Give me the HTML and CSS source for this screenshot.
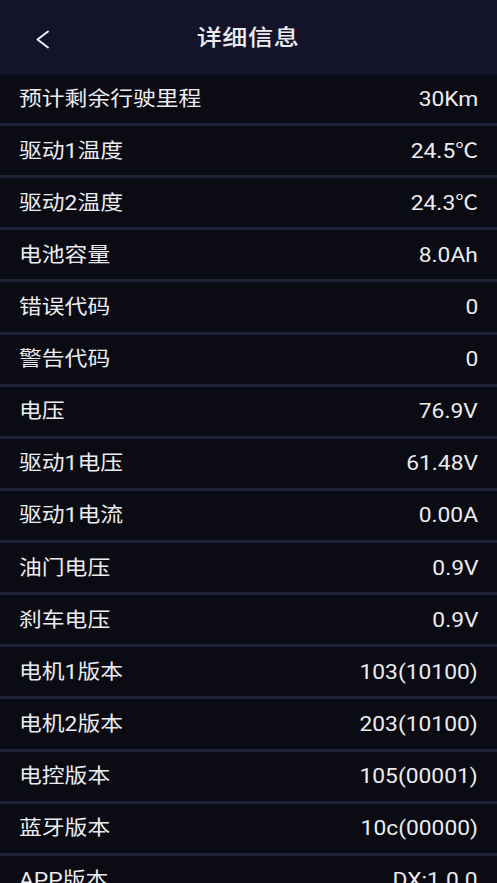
FILE: index.html
```html
<!DOCTYPE html>
<html lang="zh">
<head>
<meta charset="utf-8">
<title>详细信息</title>
<link rel="stylesheet" href="styles.css">
</head>
<body>
<div class="app">
  <header class="topbar">
    <span class="back">
      <svg width="17" height="19" viewBox="0 0 17 19"><path d="M14 1.5 L3.5 9.5 L14 17.5" fill="none" stroke="#f0f0f4" stroke-width="2" stroke-linecap="round" stroke-linejoin="round"/></svg>
    </span>
    <h1 class="title">详细信息</h1>
  </header>
  <ul class="list">
    <li class="row"><span class="label">预计剩余行驶里程</span><span class="value">30Km</span></li>
    <li class="row"><span class="label">驱动1温度</span><span class="value">24.5℃</span></li>
    <li class="row"><span class="label">驱动2温度</span><span class="value">24.3℃</span></li>
    <li class="row"><span class="label">电池容量</span><span class="value">8.0Ah</span></li>
    <li class="row"><span class="label">错误代码</span><span class="value">0</span></li>
    <li class="row"><span class="label">警告代码</span><span class="value">0</span></li>
    <li class="row"><span class="label">电压</span><span class="value">76.9V</span></li>
    <li class="row"><span class="label">驱动1电压</span><span class="value">61.48V</span></li>
    <li class="row"><span class="label">驱动1电流</span><span class="value">0.00A</span></li>
    <li class="row"><span class="label">油门电压</span><span class="value">0.9V</span></li>
    <li class="row"><span class="label">刹车电压</span><span class="value">0.9V</span></li>
    <li class="row"><span class="label">电机1版本</span><span class="value">103(10100)</span></li>
    <li class="row"><span class="label">电机2版本</span><span class="value">203(10100)</span></li>
    <li class="row"><span class="label">电控版本</span><span class="value">105(00001)</span></li>
    <li class="row"><span class="label">蓝牙版本</span><span class="value">10c(00000)</span></li>
    <li class="row"><span class="label">APP版本</span><span class="value">DX:1.0.0</span></li>
  </ul>
</div>
</body>
</html>
```
FILE: styles.css
```css
html, body {
  margin: 0;
  padding: 0;
  background: #0a0b13;
  overflow: hidden;
}
body {
  font-family: Roboto, "Noto Sans CJK SC", sans-serif;
  color: #ececf0;
}
.app {
  width: 497px;
  height: 883px;
  overflow: hidden;
}
.topbar {
  position: relative;
  height: 75px;
  background: #13142a;
  display: flex;
  align-items: center;
  justify-content: center;
}
.back {
  position: absolute;
  left: 34px;
  top: 30px;
  width: 17px;
  height: 19px;
  display: flex;
}
.title {
  margin: 0;
  font-size: 22px;
  font-weight: 500;
  letter-spacing: 0.5px;
  line-height: 1;
  margin-top: 0;
  transform: scaleX(1.14);
}
.list {
  list-style: none;
  margin: 0;
  padding: 0;
}
.row {
  height: 49.14px;
  border-bottom: 3px solid #1b2037;
  display: flex;
  align-items: center;
  justify-content: space-between;
  padding: 0 19px;
  font-size: 20px;
}
.row:first-child {
  height: 48px;
}
.label {
  line-height: 1;
  white-space: nowrap;
  transform: scaleX(1.14);
  transform-origin: left center;
}
.value {
  line-height: 1;
  white-space: nowrap;
  transform: scaleX(1.14);
  transform-origin: right center;
}
```
